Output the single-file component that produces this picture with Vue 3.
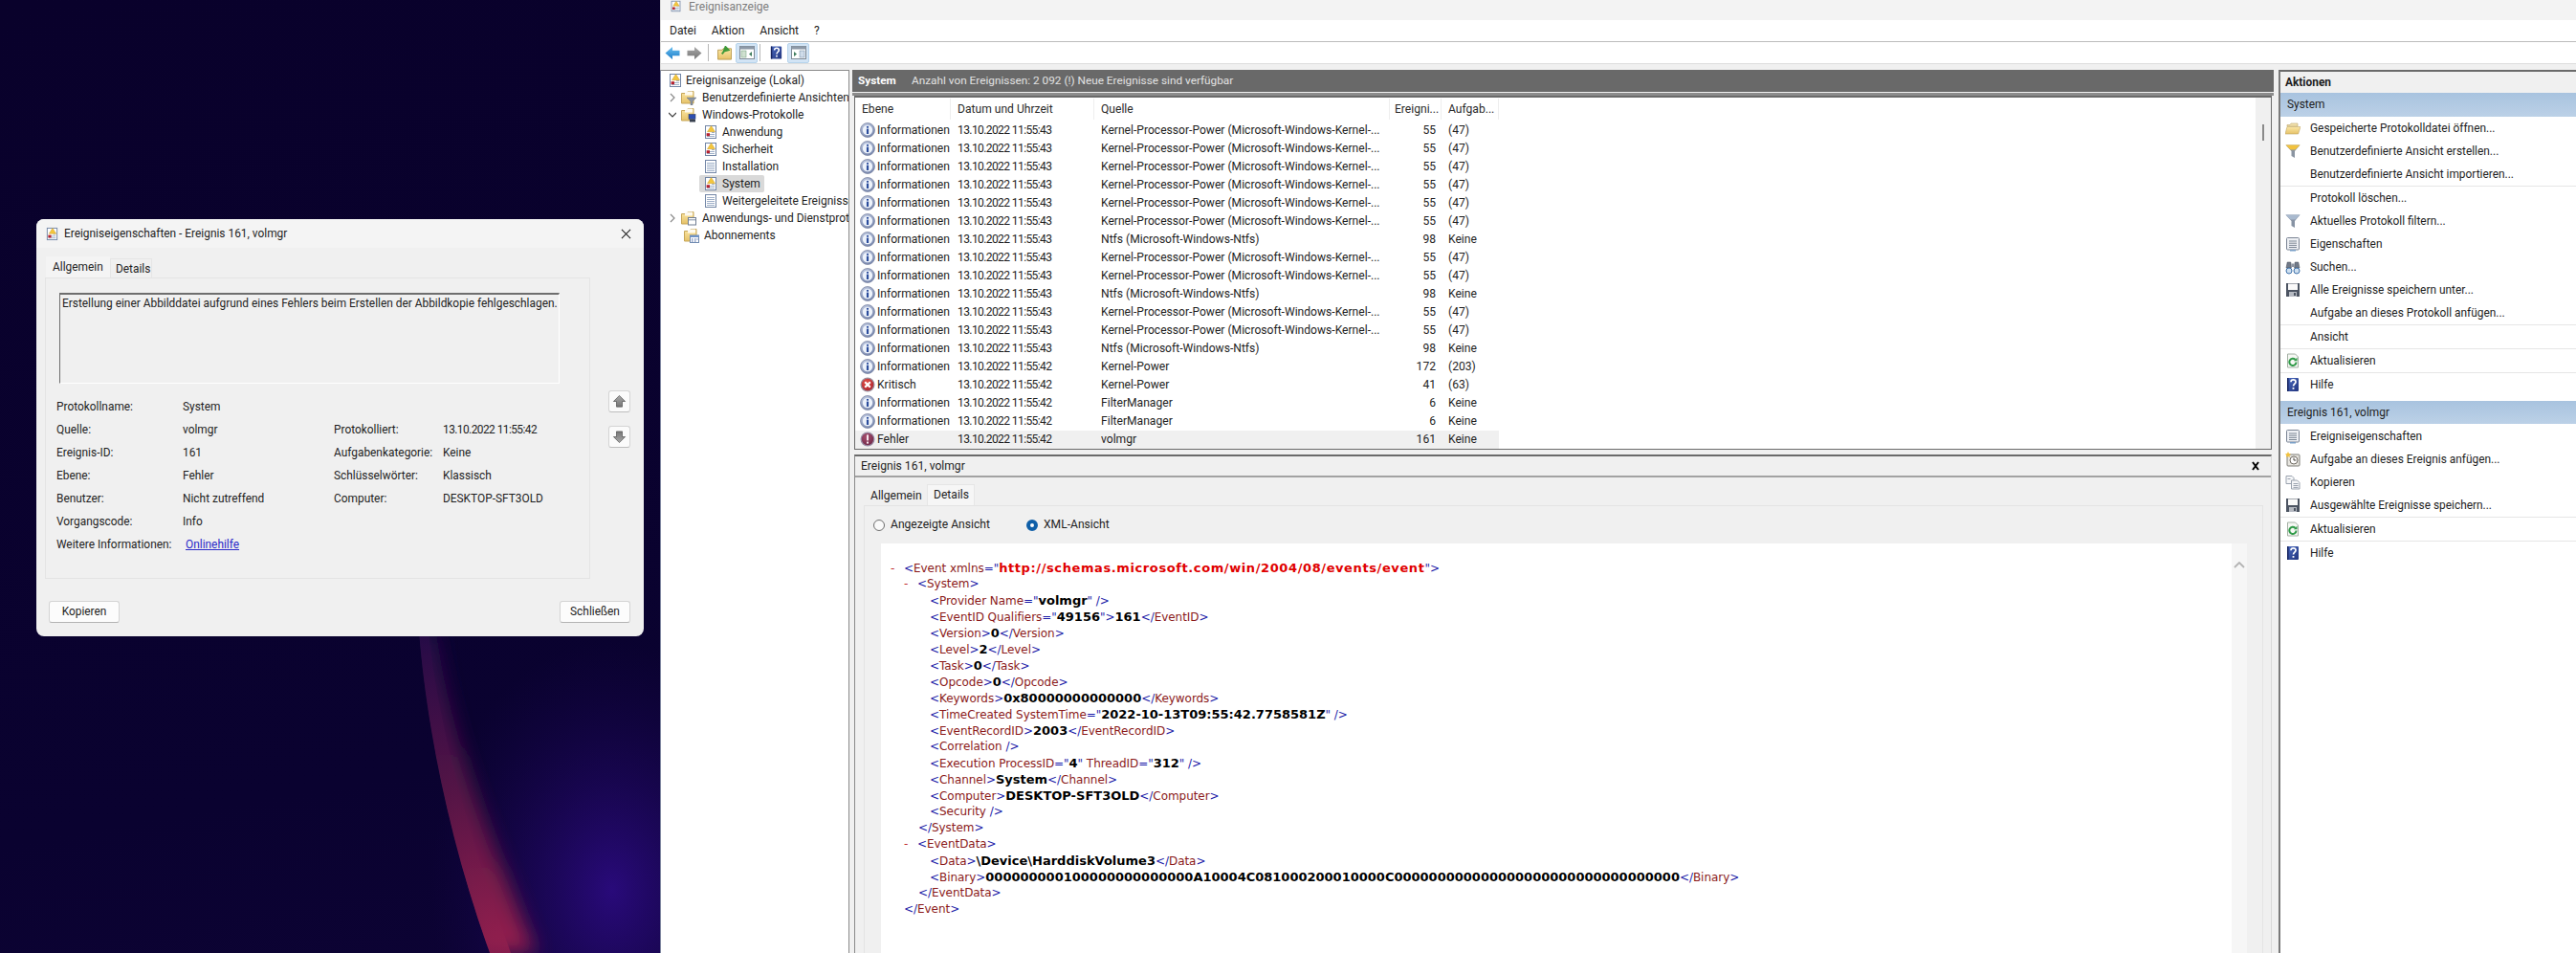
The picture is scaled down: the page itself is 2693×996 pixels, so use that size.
<script setup>
const fields = [
  ['Protokollname:', 'System', '', ''],
  ['Quelle:', 'volmgr', 'Protokolliert:', '13.10.2022 11:55:42'],
  ['Ereignis-ID:', '161', 'Aufgabenkategorie:', 'Keine'],
  ['Ebene:', 'Fehler', 'Schlüsselwörter:', 'Klassisch'],
  ['Benutzer:', 'Nicht zutreffend', 'Computer:', 'DESKTOP-SFT3OLD'],
  ['Vorgangscode:', 'Info', '', ''],
]

const KP = 'Kernel-Processor-Power (Microsoft-Windows-Kernel-...'
const NT = 'Ntfs (Microsoft-Windows-Ntfs)'
const I = 'Informationen'
const rows = [
  [I, '43', KP, 55, '(47)'], [I, '43', KP, 55, '(47)'], [I, '43', KP, 55, '(47)'],
  [I, '43', KP, 55, '(47)'], [I, '43', KP, 55, '(47)'], [I, '43', KP, 55, '(47)'],
  [I, '43', NT, 98, 'Keine'], [I, '43', KP, 55, '(47)'], [I, '43', KP, 55, '(47)'],
  [I, '43', NT, 98, 'Keine'], [I, '43', KP, 55, '(47)'], [I, '43', KP, 55, '(47)'],
  [I, '43', NT, 98, 'Keine'], [I, '42', 'Kernel-Power', 172, '(203)'],
  ['Kritisch', '42', 'Kernel-Power', 41, '(63)'], [I, '42', 'FilterManager', 6, 'Keine'],
  [I, '42', 'FilterManager', 6, 'Keine'], ['Fehler', '42', 'volmgr', 161, 'Keine'],
].map(([level, sec, source, id, task], i) => ({
  key: i,
  level,
  date: '13.10.2022 11:55:' + sec,
  source,
  id,
  task,
  icon: level === I ? 'i-info' : level === 'Kritisch' ? 'i-crit' : 'i-err',
}))

const tree = [
  { label: 'Ereignisanzeige (Lokal)', icon: 'i-log', pad: 7, gap: 3, arrow: '' },
  { label: 'Benutzerdefinierte Ansichten', icon: 'i-folder-filter', pad: 8, gap: 6, arrow: 'r' },
  { label: 'Windows-Protokolle', icon: 'i-folder-pc', pad: 8, gap: 6, arrow: 'd' },
  { label: 'Anwendung', icon: 'i-log', pad: 44, gap: 4, arrow: '' },
  { label: 'Sicherheit', icon: 'i-log', pad: 44, gap: 4, arrow: '' },
  { label: 'Installation', icon: 'i-logplain', pad: 44, gap: 4, arrow: '' },
  { label: 'System', icon: 'i-log', pad: 44, gap: 4, arrow: '', selected: true },
  { label: 'Weitergeleitete Ereignisse', icon: 'i-logplain', pad: 44, gap: 4, arrow: '' },
  { label: 'Anwendungs- und Dienstprotokolle', icon: 'i-folder-page', pad: 8, gap: 6, arrow: 'r' },
  { label: 'Abonnements', icon: 'i-folder-cal', pad: 24, gap: 5, arrow: '' },
]

const actionsSystem = [
  { t: 'Gespeicherte Protokolldatei öffnen...', i: 'i-open' },
  { t: 'Benutzerdefinierte Ansicht erstellen...', i: 'i-funnel-y' },
  { t: 'Benutzerdefinierte Ansicht importieren...', sep: true },
  { t: 'Protokoll löschen...' },
  { t: 'Aktuelles Protokoll filtern...', i: 'i-funnel-g' },
  { t: 'Eigenschaften', i: 'i-props' },
  { t: 'Suchen...', i: 'i-binoc' },
  { t: 'Alle Ereignisse speichern unter...', i: 'i-floppy' },
  { t: 'Aufgabe an dieses Protokoll anfügen...', sep: true },
  { t: 'Ansicht', sep: true },
  { t: 'Aktualisieren', i: 'i-refresh', sep: true },
  { t: 'Hilfe', i: 'i-help' },
]
const actionsEvent = [
  { t: 'Ereigniseigenschaften', i: 'i-props' },
  { t: 'Aufgabe an dieses Ereignis anfügen...', i: 'i-task' },
  { t: 'Kopieren', i: 'i-copy' },
  { t: 'Ausgewählte Ereignisse speichern...', i: 'i-floppy', sep: true },
  { t: 'Aktualisieren', i: 'i-refresh', sep: true },
  { t: 'Hilfe', i: 'i-help' },
]

function tokenize(src, urlValue) {
  const out = []
  let inTag = false
  for (const m of src.matchAll(/<\/?|\/?>|="[^"]*"|\s+|[^<>=\s/]+/g)) {
    const s = m[0]
    if (s === '<' || s === '</') { inTag = true; out.push(['p', s]) }
    else if (s === '>' || s === '/>') { inTag = false; out.push(['p', s]) }
    else if (s.startsWith('="')) {
      out.push(['p', '="'])
      out.push([urlValue ? 'u' : 'v', s.slice(2, -1)])
      out.push(['p', '"'])
    } else if (inTag) out.push(['n', s])
    else out.push(['v', s])
  }
  return out
}

const binary = '000000000100000000000000A10004C0810002000100' + '00C' + '0'.repeat(33)
const xml = [
  [10, true, '<Event xmlns="http://schemas.microsoft.com/win/2004/08/events/event">', true],
  [24, true, '<System>'],
  [51, false, '<Provider Name="volmgr" />'],
  [51, false, '<EventID Qualifiers="49156">161</EventID>'],
  [51, false, '<Version>0</Version>'],
  [51, false, '<Level>2</Level>'],
  [51, false, '<Task>0</Task>'],
  [51, false, '<Opcode>0</Opcode>'],
  [51, false, '<Keywords>0x80000000000000</Keywords>'],
  [51, false, '<TimeCreated SystemTime="2022-10-13T09:55:42.7758581Z" />'],
  [51, false, '<EventRecordID>2003</EventRecordID>'],
  [51, false, '<Correlation />'],
  [51, false, '<Execution ProcessID="4" ThreadID="312" />'],
  [51, false, '<Channel>System</Channel>'],
  [51, false, '<Computer>DESKTOP-SFT3OLD</Computer>'],
  [51, false, '<Security />'],
  [39, false, '</System>'],
  [24, true, '<EventData>'],
  [51, false, '<Data>\\Device\\HarddiskVolume3</Data>'],
  [51, false, '<Binary>' + binary + '</Binary>'],
  [39, false, '</EventData>'],
  [24, false, '</Event>'],
].map(([pad, dash, src, url], i) => ({ key: i, pad, dash, parts: tokenize(src, url) }))
</script>

<template>
  <div class="desktop">
    <svg class="defs" aria-hidden="true">
      <defs>
        <radialGradient id="gRing" cx="40%" cy="30%" r="80%">
          <stop offset="0" stop-color="#c9d3e8" />
          <stop offset="1" stop-color="#6d7da6" />
        </radialGradient>
        <radialGradient id="gCrit" cx="40%" cy="30%" r="80%">
          <stop offset="0" stop-color="#e2524a" />
          <stop offset="1" stop-color="#a71f2a" />
        </radialGradient>
        <radialGradient id="gErr" cx="40%" cy="30%" r="80%">
          <stop offset="0" stop-color="#a8506e" />
          <stop offset="1" stop-color="#6e2748" />
        </radialGradient>
        <linearGradient id="gBlue" x1="0" y1="0" x2="0" y2="1">
          <stop offset="0" stop-color="#6cc0f0" />
          <stop offset="1" stop-color="#1b7cc8" />
        </linearGradient>
        <linearGradient id="gGrey" x1="0" y1="0" x2="0" y2="1">
          <stop offset="0" stop-color="#a8a8a8" />
          <stop offset="1" stop-color="#767676" />
        </linearGradient>
        <linearGradient id="gFolder" x1="0" y1="0" x2="0" y2="1">
          <stop offset="0" stop-color="#fbe7a6" />
          <stop offset="1" stop-color="#e6c268" />
        </linearGradient>
        <linearGradient id="gHelp" x1="0" y1="0" x2="1" y2="1">
          <stop offset="0" stop-color="#4a6ac0" />
          <stop offset="1" stop-color="#22357e" />
        </linearGradient>
        <linearGradient id="gBand" gradientUnits="userSpaceOnUse" x1="0" y1="660" x2="0" y2="996">
          <stop offset="0" stop-color="#260a48" />
          <stop offset="0.5" stop-color="#551446" />
          <stop offset="1" stop-color="#96204e" />
        </linearGradient>
        <radialGradient id="gGlow" cx="50%" cy="50%" r="50%">
          <stop offset="0" stop-color="#2c0b82" stop-opacity="0.9" />
          <stop offset="1" stop-color="#1a0650" stop-opacity="0" />
        </radialGradient>
        <filter id="fBlur" x="-50%" y="-20%" width="200%" height="140%">
          <feGaussianBlur stdDeviation="10" />
        </filter>
        <clipPath id="cEdge">
          <path d="M438 660C446 760 470 880 512 996H690V660Z" />
        </clipPath>
      </defs>

      <symbol id="i-info" viewBox="0 0 16 16">
        <circle cx="8" cy="8" r="7.5" fill="url(#gRing)" stroke="#75809e" stroke-width=".7" />
        <circle cx="8" cy="8" r="5.2" fill="#eef3fb" />
        <circle cx="8" cy="4.8" r="1.15" fill="#2b4c9c" />
        <rect x="6.9" y="6.6" width="2.2" height="5.4" fill="#2b4c9c" />
      </symbol>
      <symbol id="i-crit" viewBox="0 0 16 16">
        <circle cx="8" cy="8" r="7.5" fill="#9a8f9c" />
        <circle cx="8" cy="8" r="6.2" fill="url(#gCrit)" />
        <path d="M5.2 5.2l5.6 5.6M10.8 5.2l-5.6 5.6" stroke="#fff" stroke-width="2.2" />
      </symbol>
      <symbol id="i-err" viewBox="0 0 16 16">
        <circle cx="8" cy="8" r="7.5" fill="#9a8fa6" />
        <circle cx="8" cy="8" r="6.2" fill="url(#gErr)" />
        <rect x="7" y="3.4" width="2" height="6" fill="#f4e6ec" />
        <rect x="7" y="10.6" width="2" height="2" fill="#f4e6ec" />
      </symbol>

      <symbol id="i-logplain" viewBox="0 0 16 16">
        <rect x="2.5" y="1.5" width="11" height="13" fill="#fff" stroke="#7286a6" />
        <path d="M4 4.500h8M4 6.500h8M4 8.500h8M4 10.500h8M4 12.500h8" stroke="#9fb0c8" />
      </symbol>
      <symbol id="i-log" viewBox="0 0 16 16">
        <rect x="2.5" y="1.5" width="11" height="13" fill="#fff" stroke="#7286a6" />
        <path d="M4 10.500h8M4 12.500h8M9 8.500h3" stroke="#9fb0c8" />
        <path d="M8.500 1.500l4 6.200h-8z" fill="#f4c63c" stroke="#c99b26" stroke-width=".5" />
        <rect x="3.6" y="9.200" width="3.400" height="3" fill="#b5202e" />
      </symbol>

      <symbol id="i-folder-base" viewBox="0 0 16 16">
        <path d="M.5 3.500h5l1.500-2h6v12.500H.5z" fill="url(#gFolder)" stroke="#c6a658" />
        <path d="M4 1.500h8v4H4z" fill="#fff" opacity=".85" />
      </symbol>
      <symbol id="i-folder-filter" viewBox="0 0 16 16">
        <use href="#i-folder-base" width="16" height="16" />
        <path d="M6 8h10l-4 4v4h-2v-4z" fill="#8c94a2" stroke="#5c6472" stroke-width=".4" />
      </symbol>
      <symbol id="i-folder-pc" viewBox="0 0 16 16">
        <use href="#i-folder-base" width="16" height="16" />
        <rect x="8" y="7.500" width="7" height="5" fill="#2f4fb0" stroke="#20305e" stroke-width=".5" />
        <rect x="9" y="13" width="6" height="2.500" fill="#38404f" />
      </symbol>
      <symbol id="i-folder-page" viewBox="0 0 16 16">
        <use href="#i-folder-base" width="16" height="16" />
        <rect x="7.500" y="7.500" width="8" height="7.500" fill="#fff" stroke="#6f7d92" />
        <path d="M8 9.800h7" stroke="#7e8ca4" />
      </symbol>
      <symbol id="i-folder-cal" viewBox="0 0 16 16">
        <use href="#i-folder-base" width="16" height="16" />
        <rect x="6.500" y="8" width="9" height="7.500" fill="#fff" stroke="#6f8ab0" />
        <rect x="6.500" y="8" width="9" height="2" fill="#6d93c8" />
        <path d="M8 12h1.500M11 12h1.500M8 14h1.500M11 14h1.500M13.500 12h1" stroke="#4060a0" />
      </symbol>

      <symbol id="i-open" viewBox="0 0 16 16">
        <path d="M2 6V4.500h3l1-1.500h7v3z" fill="#f2e2ae" stroke="#bda668" stroke-width=".6" />
        <path d="M0 14l2-7.500h14L13.600 14z" fill="url(#gFolder)" stroke="#bda668" stroke-width=".6" />
      </symbol>
      <symbol id="i-funnel-y" viewBox="0 0 16 16">
        <path d="M.5 1.500h15L10 8v7L6.500 13V8z" fill="#8b95a2" />
        <path d="M.5 1.500h15L10.500 6.500h-5z" fill="#f2c23e" />
      </symbol>
      <symbol id="i-funnel-g" viewBox="0 0 16 16">
        <path d="M.5 1.500h15L10 8v7L6.500 13V8z" fill="#8793a4" />
        <path d="M.5 1.500h15L10.500 6.500h-5z" fill="#a9bacf" />
      </symbol>
      <symbol id="i-props" viewBox="0 0 16 16">
        <rect x="1.500" y="1.500" width="13" height="12.500" rx="1" fill="#eef0f4" stroke="#7a8494" />
        <path d="M4 5h8M4 7.200h8M4 9.400h8M4 11.500h8" stroke="#7d8896" />
        <rect x="5" y="14" width="6" height="1.500" fill="#7aa0c8" />
      </symbol>
      <symbol id="i-binoc" viewBox="0 0 16 16">
        <path d="M1 9l1.200-6h3.600l.6 6zM9.600 9l.6-6h3.600L15 9z" fill="#727a88" stroke="#444c5a" stroke-width=".5" />
        <rect x="6.400" y="4.500" width="3.200" height="3.500" fill="#8c93a0" />
        <circle cx="4" cy="12" r="3" fill="#cfe0f0" stroke="#3a6ea8" />
        <circle cx="12" cy="12" r="3" fill="#cfe0f0" stroke="#3a6ea8" />
      </symbol>
      <symbol id="i-floppy" viewBox="0 0 16 16">
        <path d="M1 1h14v14H1z" fill="#4c5462" />
        <rect x="3" y="1.500" width="10" height="6.500" fill="#fafafa" />
        <rect x="4" y="10" width="8" height="5" fill="#b6bac2" />
        <rect x="9" y="11" width="2" height="3" fill="#4c5462" />
      </symbol>
      <symbol id="i-refresh" viewBox="0 0 16 16">
        <path d="M2.500 1h8l3 3v11h-11z" fill="#f6f8f4" stroke="#a4b0a4" />
        <path d="M11.500 9.500a3.600 3.600 0 1 1-1-2.600" fill="none" stroke="#2f9a48" stroke-width="2" />
        <path d="M12.500 4.600v3.600H9z" fill="#2f9a48" />
      </symbol>
      <symbol id="i-help" viewBox="0 0 16 16">
        <rect x="2" y="1" width="12" height="14" rx="1" fill="url(#gHelp)" />
        <rect x="2" y="1" width="1.500" height="14" fill="#16235e" />
        <path d="M6 5.200c0-3 5-3 5 0 0 2-2.500 2-2.500 4.400" fill="none" stroke="#fff" stroke-width="1.700" />
        <rect x="7.600" y="11" width="1.800" height="1.800" fill="#fff" />
      </symbol>
      <symbol id="i-task" viewBox="0 0 16 16">
        <rect x="2" y="3" width="13" height="12" rx="1" fill="#e8e6e0" stroke="#7e7e78" />
        <circle cx="9" cy="9" r="4" fill="#fff" stroke="#6f6a62" />
        <path d="M9 6.500V9h2.400" fill="none" stroke="#44403a" />
        <path d="M3 0l1 2 2 .4-1.500 1.500.4 2.100L3 5l-2 1 .4-2.100L0 2.400 2 2z" fill="#f2c23e" />
      </symbol>
      <symbol id="i-copy" viewBox="0 0 16 16">
        <path d="M1 1.500h6l2 2v6H1z" fill="#f6f7f9" stroke="#9aa2ae" />
        <path d="M6.500 6h6l2.500 2.500V15H6.500z" fill="#f6f7f9" stroke="#9aa2ae" />
        <path d="M8.500 9.500h5M8.500 11.500h5M8.500 13.400h5M2.500 4.500h3" stroke="#9aa2ae" />
      </symbol>

      <symbol id="i-arrow-up" viewBox="0 0 16 16">
        <path d="M8 1.500l6.500 6.500h-3.300v6H4.800V8H1.500z" fill="url(#gGrey)" stroke="#4a4a4a" stroke-width=".7" />
      </symbol>
    </svg>

    <svg class="wallpaper" viewBox="0 0 690 996" aria-hidden="true">
      <ellipse cx="640" cy="930" rx="190" ry="260" fill="url(#gGlow)" />
      <g clip-path="url(#cEdge)">
        <path d="M428 660C436 760 460 880 502 996H560C514 880 470 770 456 660Z" fill="url(#gBand)" filter="url(#fBlur)" />
        <path d="M438 660C446 760 470 880 512 996H534C492 880 458 760 448 660Z" fill="url(#gBand)" opacity=".75" />
      </g>
    </svg>

    <section class="dialog">
      <header class="dlg-title">
        <svg class="dlg-icon"><use href="#i-log" /></svg>
        <span class="dlg-title-text">Ereigniseigenschaften - Ereignis 161, volmgr</span>
        <svg class="dlg-close" viewBox="0 0 12 12">
          <path d="M1 1l10 10M11 1L1 11" stroke="#1a1a1a" stroke-width="1.100" />
        </svg>
      </header>
      <div class="dlg-main">
        <div class="dlg-left">
          <div class="dlg-tabs">
            <div class="dlg-tab active">Allgemein</div>
            <div class="dlg-tab">Details</div>
          </div>
          <div class="dlg-pane">
            <div class="dlg-msg">Erstellung einer Abbilddatei aufgrund eines Fehlers beim Erstellen der Abbildkopie fehlgeschlagen.</div>
            <div class="dlg-fields">
              <template v-for="f in fields" :key="f[0]">
                <span>{{ f[0] }}</span><span>{{ f[1] }}</span><span>{{ f[2] }}</span>
                <span :class="{ 'f-date': f[3].startsWith('13.') }">{{ f[3] }}</span>
              </template>
              <span>Weitere Informationen:</span>
              <a class="dlg-link">Onlinehilfe</a>
            </div>
          </div>
        </div>
        <div class="dlg-arrows">
          <button class="arrow-btn"><svg class="arrow-svg"><use href="#i-arrow-up" /></svg></button>
          <button class="arrow-btn"><svg class="arrow-svg flip"><use href="#i-arrow-up" /></svg></button>
        </div>
      </div>
      <footer class="dlg-foot">
        <button class="dlg-btn">Kopieren</button>
        <button class="dlg-btn">Schließen</button>
      </footer>
    </section>

    <section class="mmc">
      <div class="mmc-title">
        <svg class="mmc-title-icon"><use href="#i-log" /></svg>
        <span>Ereignisanzeige</span>
      </div>
      <nav class="mmc-menu">
        <span>Datei</span><span>Aktion</span><span>Ansicht</span><span>?</span>
      </nav>
      <div class="mmc-tools">
        <svg class="tool" viewBox="0 0 16 16"><path d="M0 8l8-7v4h8v6H8v4z" fill="url(#gBlue)" /></svg>
        <svg class="tool t2" viewBox="0 0 16 16"><path d="M16 8L8 1v4H0v6h8v4z" fill="url(#gGrey)" /></svg>
        <i class="tool-sep"></i>
        <svg class="tool t3" viewBox="0 0 16 16">
          <path d="M.5 4.500h5l1-1.500h9v12H.5z" fill="url(#gFolder)" stroke="#bb9c50" />
          <path d="M5 9l4-4.500M9 1l3.500 3.500L7 6z" stroke="#3f9a3a" stroke-width="2" fill="#3f9a3a" />
        </svg>
        <span class="tool-btn">
          <svg viewBox="0 0 16 14" width="16" height="14">
            <rect x=".5" y=".5" width="15" height="13" fill="#fff" stroke="#7f8a96" />
            <rect x=".5" y=".5" width="15" height="3" fill="#8d99a8" />
            <rect x="2" y="5" width="5" height="7" fill="#cfe0cf" stroke="#6e9a7a" stroke-width=".5" />
            <path d="M13 6v5l-3-2.500z" fill="#3e7c5c" />
          </svg>
        </span>
        <i class="tool-sep s2"></i>
        <svg class="tool t4" viewBox="0 0 16 16"><use href="#i-help" width="16" height="16" /></svg>
        <span class="tool-btn b2">
          <svg viewBox="0 0 16 14" width="16" height="14">
            <rect x=".5" y=".5" width="15" height="13" fill="#fff" stroke="#7f8a96" />
            <rect x=".5" y=".5" width="15" height="3" fill="#8d99a8" />
            <rect x="9" y="5" width="5" height="7" fill="#cfdcea" stroke="#6e86a0" stroke-width=".5" />
            <path d="M3 6v5l3-2.500z" fill="#3e7c5c" />
          </svg>
        </span>
      </div>

      <div class="workspace">
        <aside class="tree">
          <div
            v-for="n in tree"
            :key="n.label"
            class="tree-row"
            :style="{ paddingLeft: n.pad + 'px', gap: n.gap + 'px' }"
          >
            <svg v-if="n.arrow" class="tree-arrow" viewBox="0 0 8 10">
              <path v-if="n.arrow === 'r'" d="M2 1l4 4-4 4" fill="none" stroke="#8a8a8a" stroke-width="1.200" />
              <path v-else d="M0 3l4 4 4-4" fill="none" stroke="#3a3a3a" stroke-width="1.200" />
            </svg>
            <svg class="tree-icon"><use :href="'#' + n.icon" /></svg>
            <span class="tree-label" :class="{ sel: n.selected }">{{ n.label }}</span>
          </div>
        </aside>

        <main class="center">
          <div class="center-head">
            <b>System</b>
            <span>Anzahl von Ereignissen: 2 092 (!) Neue Ereignisse sind verfügbar</span>
          </div>
          <div class="center-rule"></div>
          <div class="grid-box">
            <div class="grid-scroll">
              <div class="grid-head grid-row">
                <span>Ebene</span><span>Datum und Uhrzeit</span><span>Quelle</span>
                <span class="h-id">Ereigni...</span><span>Aufgab...</span>
              </div>
              <div
                v-for="r in rows"
                :key="r.key"
                class="grid-row body"
                :class="{ current: r.level === 'Fehler' }"
              >
                <span class="c-level"><svg class="level-icon"><use :href="'#' + r.icon" /></svg>{{ r.level }}</span>
                <span class="c-date">{{ r.date }}</span>
                <span>{{ r.source }}</span>
                <span class="c-id">{{ r.id }}</span>
                <span>{{ r.task }}</span>
              </div>
            </div>
            <div class="grid-bar"><i></i></div>
          </div>

          <div class="detail">
            <div class="detail-head">
              <span>Ereignis 161, volmgr</span>
              <svg class="detail-x" viewBox="0 0 8 10">
                <path d="M1 1l6 8M7 1L1 9" stroke="#000" stroke-width="2" />
              </svg>
            </div>
            <div class="detail-tabs">
              <div class="d-tab">Allgemein</div>
              <div class="d-tab active">Details</div>
            </div>
            <div class="detail-pane">
              <div class="radios">
                <label class="radio first"><i class="dot"></i>Angezeigte Ansicht</label>
                <label class="radio"><i class="dot on"></i>XML-Ansicht</label>
              </div>
              <div class="xml-box">
                <div class="xml">
                  <div v-for="l in xml" :key="l.key" class="xml-line" :style="{ paddingLeft: l.pad + 'px' }">
                    <span v-if="l.dash" class="dash">-</span>
                    <span v-for="(p, j) in l.parts" :key="j" :class="'x-' + p[0]">{{ p[1] }}</span>
                  </div>
                </div>
                <div class="xml-lane">
                  <svg class="chev" viewBox="0 0 12 7"><path d="M1 6l5-5 5 5" fill="none" stroke="#b4b4b4" stroke-width="1.800" /></svg>
                </div>
              </div>
            </div>
          </div>
        </main>

        <aside class="actions">
          <div class="act-title">Aktionen</div>
          <div class="act-band">System</div>
          <template v-for="a in actionsSystem" :key="a.t">
            <div class="act-row">
              <svg v-if="a.i" class="act-icon"><use :href="'#' + a.i" /></svg>
              <i v-else class="act-icon"></i>
              <span>{{ a.t }}</span>
            </div>
            <div v-if="a.sep" class="act-sep"></div>
          </template>
          <div class="act-band second">Ereignis 161, volmgr</div>
          <template v-for="a in actionsEvent" :key="'e' + a.t">
            <div class="act-row">
              <svg class="act-icon"><use :href="'#' + a.i" /></svg>
              <span>{{ a.t }}</span>
            </div>
            <div v-if="a.sep" class="act-sep"></div>
          </template>
        </aside>
      </div>
    </section>
  </div>
</template>

<style scoped>
.desktop {
  position: relative;
  width: 2693px;
  height: 996px;
  overflow: hidden;
  background: linear-gradient(170deg, #09012b 0%, #0a0230 60%, #10043a 100%);
  font: 12.1px/1.2 Roboto, "Liberation Sans", sans-serif;
  color: #1e1e1e;
}
.defs { position: absolute; width: 0; height: 0; }
.wallpaper { position: absolute; left: 0; top: 0; width: 690px; height: 996px; }
svg { display: block; flex: none; }

/* Dialog */
.dialog {
  position: absolute;
  left: 38px;
  top: 229px;
  width: 635px;
  height: 436px;
  border-radius: 8px;
  overflow: hidden;
  background: #f0f0f0;
  display: flex;
  flex-direction: column;
  font-size: 11.9px;
}
.dlg-title {
  height: 30px;
  flex: none;
  background: #f4f4f4;
  display: flex;
  align-items: center;
  padding: 0 9px;
}
.dlg-icon { width: 15px; height: 15px; margin-right: 5px; }
.dlg-title-text { flex: 1; font-size: 11.9px; }
.dlg-close { width: 11px; height: 11px; margin-right: 4px; }
.dlg-main { display: flex; padding: 9px 0 0 9px; }
.dlg-left { width: 570px; flex: none; }
.dlg-tabs { display: flex; height: 22px; align-items: flex-end; }
.dlg-tab { padding: 0 6px 0 5px; height: 20px; line-height: 20px; width: 44px; border: 1px solid #e6e6e6; border-bottom: 0; margin-left: 0; }
.dlg-tab.active { width: 67px; height: 22px; line-height: 20px; padding-left: 6px; margin-left: 1px; background: #f4f4f4; border-color: #f4f4f4; box-sizing: border-box; }
.dlg-tab:not(.active) { box-sizing: border-box; padding-left: 5px; }
.dlg-pane {
  height: 315px;
  box-sizing: border-box;
  border: 1px solid #e4e4e4;
  padding: 15px 0 0 11px;
}
.dlg-msg {
  width: 523px;
  height: 95px;
  box-sizing: border-box;
  margin-left: 3px;
  padding: 2px 0 0 2px;
  border: 1px solid #fff;
  border-top: 2px solid #6e6e6e;
  border-left: 1px solid #6e6e6e;
  white-space: nowrap;
}
.dlg-fields {
  margin-top: 12px;
  display: grid;
  grid-template-columns: 132px 158px 114px 1fr;
  grid-auto-rows: 24px;
  align-items: center;
  white-space: nowrap;
}
.f-date { letter-spacing: -.55px; }
.dlg-link { color: #2a2ac8; text-decoration: underline; padding-left: 3px; }
.dlg-arrows {
  margin-left: 19px;
  padding-top: 140px;
  display: flex;
  flex-direction: column;
  gap: 14px;
}
.arrow-btn {
  width: 23px;
  height: 23px;
  padding: 0;
  background: #fbfbfb;
  border: 1px solid #d4d4d4;
  border-bottom-color: #bdbdbd;
  border-radius: 3px;
  display: flex;
  align-items: center;
  justify-content: center;
}
.arrow-svg { width: 15px; height: 15px; }
.flip { transform: scaleY(-1); }
.dlg-foot {
  margin-top: 23px;
  padding: 0 14px 0 13px;
  display: flex;
  justify-content: space-between;
}
.dlg-btn {
  width: 74px;
  height: 23px;
  padding: 0;
  background: #fcfcfc;
  border: 1px solid #d4d4d4;
  border-bottom-color: #b4b4b4;
  border-radius: 3px;
  font: inherit;
  color: inherit;
}

/* Main window */
.mmc {
  position: absolute;
  left: 690px;
  top: 0;
  width: 2003px;
  height: 996px;
  background: #f0f0f0;
  display: flex;
  flex-direction: column;
  border-left: 1px solid #d8d8d8;
  box-sizing: border-box;
}
.mmc-title {
  height: 21px;
  flex: none;
  background: #f3f3f3;
  color: #7d7d7d;
  display: flex;
  gap: 7px;
  padding-left: 9px;
  line-height: 14px;
  font-size: 12px;
}
.mmc-title-icon { width: 13px; height: 13px; }
.mmc-menu {
  height: 22px;
  flex: none;
  box-sizing: content-box;
  background: #fff;
  border-bottom: 1px solid #bcbcbc;
  display: flex;
  align-items: center;
  gap: 16px;
  padding-left: 9px;
}
.mmc-tools {
  height: 22px;
  flex: none;
  background: #fff;
  border-bottom: 1px solid #dedede;
  display: flex;
  align-items: center;
  padding-left: 4px;
}
.tool { width: 16px; height: 15px; }
.t2 { margin-left: 7px; }
.t3 { margin-left: 9px; width: 15px; height: 15px; }
.t4 { margin-left: 9px; width: 15px; height: 16px; }
.tool-sep { width: 1px; height: 18px; background: #b8b8b8; margin-left: 6px; }
.s2 { margin-left: 2px; }
.tool-btn {
  width: 23px;
  height: 21px;
  margin-left: 4px;
  background: #d2e4f5;
  border: 1px solid #b6d4ec;
  border-radius: 2px;
  box-sizing: border-box;
  display: flex;
  align-items: center;
  justify-content: center;
}
.b2 { margin-left: 4px; }
.workspace {
  flex: 1;
  margin-top: 6px;
  display: flex;
  min-height: 0;
}

/* Tree */
.tree {
  width: 196px;
  flex: none;
  background: #fff;
  border-top: 1px solid #8a8a8a;
  border-right: 1px solid #8a8a8a;
  border-left: 1px solid #7f86a0;
  box-sizing: content-box;
  padding-top: 1px;
  margin-left: -1px;
  overflow: hidden;
  font-size: 12px;
}
.tree-row { height: 18px; display: flex; align-items: center; white-space: nowrap; }
.tree-arrow { width: 8px; height: 10px; margin-right: -1px; }
.tree-icon { width: 16px; height: 16px; }
.tree-label { line-height: 18px; }
.tree-label.sel { background: #d9d9d9; margin-left: -24px; padding: 0 4px 0 24px; border-radius: 2px; position: relative; z-index: 0; }
.tree-row:has(.sel) .tree-icon { position: relative; z-index: 1; }

/* Centre */
.center {
  width: 1486px;
  flex: none;
  margin-left: 3px;
  display: flex;
  flex-direction: column;
  min-height: 0;
}
.center-head {
  height: 23px;
  flex: none;
  background: #696969;
  color: #e2e2e2;
  display: flex;
  align-items: center;
  padding-left: 6px;
  gap: 15px;
  font-size: 11.8px;
}
.center-head b { color: #fff; font-weight: 700; width: 41px; }
.center-rule {
  height: 3px;
  flex: none;
  margin-top: 1px;
  background: #8c8c8c;
}
.grid-box {
  margin: 0 2px;
  height: 370px;
  box-sizing: border-box;
  flex: none;
  background: #fff;
  border: 1px solid #6a6a6a;
  border-top-width: 2px;
  display: flex;
}
.grid-scroll { flex: 1; min-width: 0; }
.grid-row {
  display: grid;
  grid-template-columns: 100px 150px 309px 54px 60px;
  width: 673px;
  white-space: nowrap;
  align-items: center;
}
.grid-row > span { padding-left: 7px; overflow: hidden; }
.grid-head { height: 24.5px; color: #2a2a2a; }
.grid-head > span { line-height: 22px; border-right: 1px solid #eeeeee; }
.grid-head .h-id { padding-left: 5px; }
.body { height: 19px; }
.body.current { background: #f0f0f0; }
.c-level { display: flex; align-items: center; gap: 2px; padding-left: 5px !important; }
.c-date { letter-spacing: -.63px; }
.level-icon { width: 16px; height: 16px; }
.c-id { text-align: right; padding: 0 6px 0 0 !important; }
.grid-bar {
  width: 16px;
  flex: none;
  background: #f0f0f0;
  padding-top: 28px;
  display: flex;
  justify-content: center;
}
.grid-bar i { display: block; width: 2px; height: 17px; background: #8a8a8a; }

/* Detail */
.detail {
  flex: 1;
  margin: 5px 2px 0;
  min-height: 0;
  border-top: 2px solid #6a6a6a;
  border-left: 1px solid #8a8a8a;
  border-right: 1px solid #d8d8d8;
  display: flex;
  flex-direction: column;
}
.detail-head {
  height: 20px;
  flex: none;
  display: flex;
  align-items: center;
  justify-content: space-between;
  padding: 0 12px 0 6px;
  border-bottom: 2px solid #a2a2a2;
}
.detail-x { width: 8px; height: 10px; }
.detail-tabs { display: flex; height: 22px; flex: none; margin: 7px 0 0 9px; align-items: flex-end; }
.d-tab { width: 66px; height: 20px; line-height: 20px; padding-left: 7px; box-sizing: border-box; }
.d-tab.active { width: 50px; height: 22px; line-height: 20px; background: #f6f6f6; border: 1px solid #e6e6e6; border-bottom: 0; padding-left: 6px; }
.detail-pane {
  flex: 1;
  min-height: 0;
  margin: 0 8px 0 9px;
  border: 1px solid #e4e4e4;
  border-bottom: 0;
  display: flex;
  flex-direction: column;
}
.radios { height: 39px; flex: none; display: flex; align-items: center; padding-left: 9px; }
.radio { display: flex; align-items: center; gap: 6px; }
.radio.first { width: 160px; }
.dot {
  width: 12px;
  height: 12px;
  box-sizing: border-box;
  border: 1px solid #6e6e6e;
  border-radius: 50%;
  background: #fafafa;
}
.dot.on { border: 4px solid #0f5fa8; background: #fff; }
.xml-box {
  flex: 1;
  min-height: 0;
  margin: 0 16px 0 17px;
  display: flex;
  overflow: hidden;
}
.xml { flex: 1; background: #fff; padding-top: 16.5px; min-width: 0; }
.xml-line {
  height: 17px;
  line-height: 17px;
  white-space: pre;
  font-family: "DejaVu Sans", sans-serif;
  font-size: 12px;
  letter-spacing: -.05px;
}
.dash { display: inline-block; width: 14px; color: #c03030; }
.x-p { color: #1c1ca8; }
.x-n { color: #8b1a1a; }
.x-v { color: #000; font-weight: 700; font-size: 13px; letter-spacing: 0; }
.x-u { color: #e00000; font-weight: 700; font-size: 13px; letter-spacing: .6px; }
.xml-lane { width: 16px; flex: none; background: #f6f6f6; }
.chev { width: 12px; height: 7px; margin: 19px 0 0 2px; }

/* Actions */
.actions {
  width: 309px;
  flex: none;
  margin-left: 5px;
  background: #fff;
  border-top: 2px solid #6a6a6a;
  border-left: 2px solid #7a7a7a;
  white-space: nowrap;
  font-size: 11.9px;
}
.act-title {
  height: 22px;
  line-height: 22px;
  background: #f0f0f0;
  padding-left: 5px;
  font-weight: 700;
}
.act-band {
  height: 25px;
  line-height: 25px;
  padding-left: 7px;
  background: linear-gradient(180deg, #a8c3df, #bcd1e7);
}
.act-band.second { height: 24px; line-height: 24px; margin-top: 5px; margin-bottom: 1px; }
.act-row { height: 24px; display: flex; align-items: center; padding-left: 5px; gap: 10px; }
.act-icon { display: block; width: 16px; height: 16px; flex: none; }
.act-sep { height: 1px; background: #e6e6e6; }
</style>

<style>
html, body { margin: 0; background: #09012b; }
</style>
